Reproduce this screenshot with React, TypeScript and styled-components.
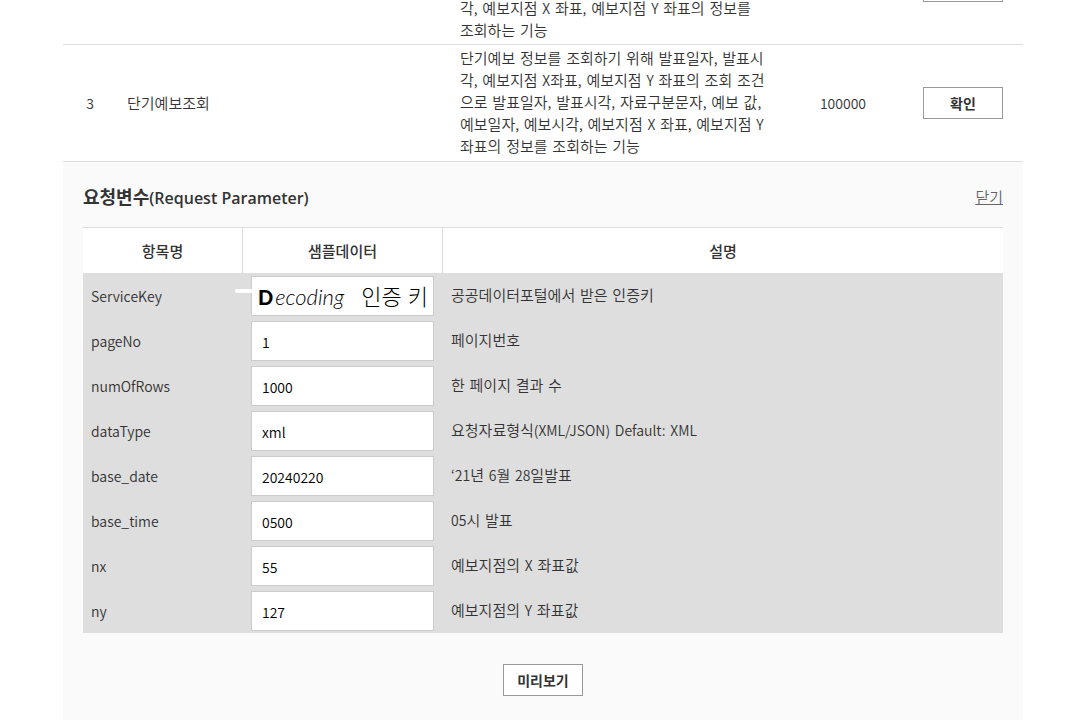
import React from "react";
import styled, { createGlobalStyle } from "styled-components";

const GlobalStyle = createGlobalStyle`
  *, *::before, *::after { box-sizing: border-box; }
  body {
    margin: 0;
    background: #fff;
    color: #333;
    font-family: "Noto Sans CJK KR", "Noto Sans", sans-serif;
    font-size: 15px;
    line-height: 22px;
  }
  input, button { font-family: inherit; }
`;

const Page = styled.main`
  padding: 0 48px 0 63px;
  overflow: hidden;
`;

/* The list is scrolled so that only the end of its first row shows. */
const FeatureTable = styled.table`
  width: 100%;
  margin-top: -72px;
  table-layout: fixed;
  border-collapse: separate;
  border-spacing: 0;
`;

const FeatureCell = styled.td<{ $align?: string; $valign?: string; $small?: boolean }>`
  height: 117px;
  padding: 2px 10px;
  border-bottom: 1px solid #ddd;
  text-align: ${(p) => p.$align ?? "left"};
  vertical-align: ${(p) => p.$valign ?? "middle"};
  font-size: ${(p) => (p.$small ? "14px" : "15px")};
  font-weight: 350;
  white-space: nowrap;
`;

/* Korean running text, with the wider word spaces of the first family. */
const Korean = styled.div`
  font-family: "DejaVu Sans", "Noto Sans CJK KR", sans-serif;
  font-weight: 350;
`;

const Latin = styled.span`
  font-family: "Noto Sans CJK KR", sans-serif;
  font-size: 14px;
  line-height: 14px;
`;

const OutlineButton = styled.button`
  width: 80px;
  height: 32px;
  padding: 0;
  border: 1px solid #999;
  background: #fff;
  color: #333;
  font-size: 14px;
  font-weight: 700;
  line-height: 20px;
  vertical-align: middle;
  cursor: pointer;
`;

const Panel = styled.section`
  padding: 23px 20px;
  background: #fafafa;
`;

const PanelHeader = styled.header`
  display: flex;
  justify-content: space-between;
  align-items: center;
  height: 24px;
  margin-bottom: 18px;
`;

const PanelTitle = styled.h2`
  margin: 0;
  font-size: 18px;
  font-weight: 700;
  line-height: 24px;
`;

const LatinTitle = styled.span`
  font-family: "Open Sans", sans-serif;
  font-size: 16px;
  font-weight: 600;
`;

const CloseLink = styled.a`
  color: #666;
  font-weight: 350;
  text-decoration: underline;
`;

const ParamTable = styled.table`
  width: 100%;
  table-layout: fixed;
  border-collapse: separate;
  border-spacing: 0;
  border-top: 1px solid #ddd;
`;

const ParamHead = styled.th`
  height: 45px;
  padding: 0 8px;
  background: #fff;
  font-weight: 500;
  text-align: center;

  & + & { border-left: 1px solid #ddd; }
`;

const ParamCell = styled.td`
  height: 45px;
  padding: 3px 8px 2px;
  background: #dedede;
  vertical-align: middle;

  & + & { border-left: 1px solid #dedede; }
`;

const ParamLabel = styled.label`
  font-size: 14px;
  font-weight: 350;
`;

const Field = styled.div`
  position: relative;
  height: 40px;
`;

const ParamInput = styled.input`
  display: block;
  width: 100%;
  height: 40px;
  padding: 2px 10px 0;
  border: 1px solid #ccc;
  border-radius: 0;
  background: #fff;
  color: #000;
  font-size: 14px;
  font-weight: 350;
`;

const KeyNote = styled.span`
  position: absolute;
  inset: 0;
  display: flex;
  align-items: center;
  justify-content: space-between;
  padding: 2px 6px 0 7px;
  color: #000;
  font-family: Lato, "Noto Sans CJK KR", sans-serif;
  font-weight: 300;
  font-size: 22px;
  pointer-events: none;

  &::before {
    content: "";
    position: absolute;
    left: -16px;
    top: 13px;
    width: 18px;
    height: 4px;
    border-radius: 2px;
    background: #fff;
  }
`;

const Initial = styled.b`
  margin-right: 2px;
  font-size: 20px;
  font-style: normal;
  font-weight: 900;
`;

const Actions = styled.div`
  display: flex;
  justify-content: center;
  padding: 31px 0 20px;
`;

const params = [
  { name: "ServiceKey", value: "", desc: "공공데이터포털에서 받은 인증키" },
  { name: "pageNo", value: "1", desc: "페이지번호" },
  { name: "numOfRows", value: "1000", desc: "한 페이지 결과 수" },
  { name: "dataType", value: "xml", desc: "요청자료형식(XML/JSON) Default: XML" },
  { name: "base_date", value: "20240220", desc: "‘21년 6월 28일발표" },
  { name: "base_time", value: "0500", desc: "05시 발표" },
  { name: "nx", value: "55", desc: "예보지점의 X 좌표값" },
  { name: "ny", value: "127", desc: "예보지점의 Y 좌표값" },
];

/* Sets the Latin letters, digits and commas of a Korean text one size smaller. */
function Mixed({ text }: { text: string }) {
  return (
    <Korean>
      {text
        .split(/([‘(]?[A-Za-z0-9,][A-Za-z0-9/():]*)/)
        .map((part, i) => (i % 2 ? <Latin key={i}>{part}</Latin> : part))}
    </Korean>
  );
}

function Lines({ lines }: { lines: string[] }) {
  return (
    <>
      {lines.map((line) => (
        <Mixed key={line} text={line} />
      ))}
    </>
  );
}

export default function App() {
  return (
    <>
      <GlobalStyle />
      <Page>
        <FeatureTable>
          <colgroup>
            <col style={{ width: 54 }} />
            <col />
            <col style={{ width: 333 }} />
            <col style={{ width: 120 }} />
            <col style={{ width: 120 }} />
          </colgroup>
          <tbody>
            <tr>
              <FeatureCell />
              <FeatureCell />
              <FeatureCell $valign="bottom">
                <Lines
                  lines={[
                    "각, 예보지점 X 좌표, 예보지점 Y 좌표의 정보를",
                    "조회하는 기능",
                  ]}
                />
              </FeatureCell>
              <FeatureCell />
              <FeatureCell $align="center">
                <OutlineButton type="button" />
              </FeatureCell>
            </tr>
            <tr>
              <FeatureCell $align="center" $small>3</FeatureCell>
              <FeatureCell>단기예보조회</FeatureCell>
              <FeatureCell>
                <Lines
                  lines={[
                    "단기예보 정보를 조회하기 위해 발표일자, 발표시",
                    "각, 예보지점 X좌표, 예보지점 Y 좌표의 조회 조건",
                    "으로 발표일자, 발표시각, 자료구분문자, 예보 값,",
                    "예보일자, 예보시각, 예보지점 X 좌표, 예보지점 Y",
                    "좌표의 정보를 조회하는 기능",
                  ]}
                />
              </FeatureCell>
              <FeatureCell $align="center" $small>100000</FeatureCell>
              <FeatureCell $align="center">
                <OutlineButton type="button">확인</OutlineButton>
              </FeatureCell>
            </tr>
          </tbody>
        </FeatureTable>

        <Panel>
          <PanelHeader>
            <PanelTitle>
              요청변수<LatinTitle>(Request Parameter)</LatinTitle>
            </PanelTitle>
            <CloseLink href="#">닫기</CloseLink>
          </PanelHeader>
          <ParamTable>
            <colgroup>
              <col style={{ width: 159 }} />
              <col style={{ width: 200 }} />
              <col />
            </colgroup>
            <thead>
              <tr>
                <ParamHead scope="col">항목명</ParamHead>
                <ParamHead scope="col">샘플데이터</ParamHead>
                <ParamHead scope="col">설명</ParamHead>
              </tr>
            </thead>
            <tbody>
              {params.map((p) => (
                <tr key={p.name}>
                  <ParamCell>
                    <ParamLabel htmlFor={p.name}>{p.name}</ParamLabel>
                  </ParamCell>
                  <ParamCell>
                    <Field>
                      <ParamInput id={p.name} type="text" defaultValue={p.value} />
                      {p.name === "ServiceKey" && (
                        <KeyNote>
                          <em><Initial>D</Initial>ecoding</em>
                          <span>인증 키</span>
                        </KeyNote>
                      )}
                    </Field>
                  </ParamCell>
                  <ParamCell><Mixed text={p.desc} /></ParamCell>
                </tr>
              ))}
            </tbody>
          </ParamTable>
          <Actions>
            <OutlineButton type="button">미리보기</OutlineButton>
          </Actions>
        </Panel>
      </Page>
    </>
  );
}
